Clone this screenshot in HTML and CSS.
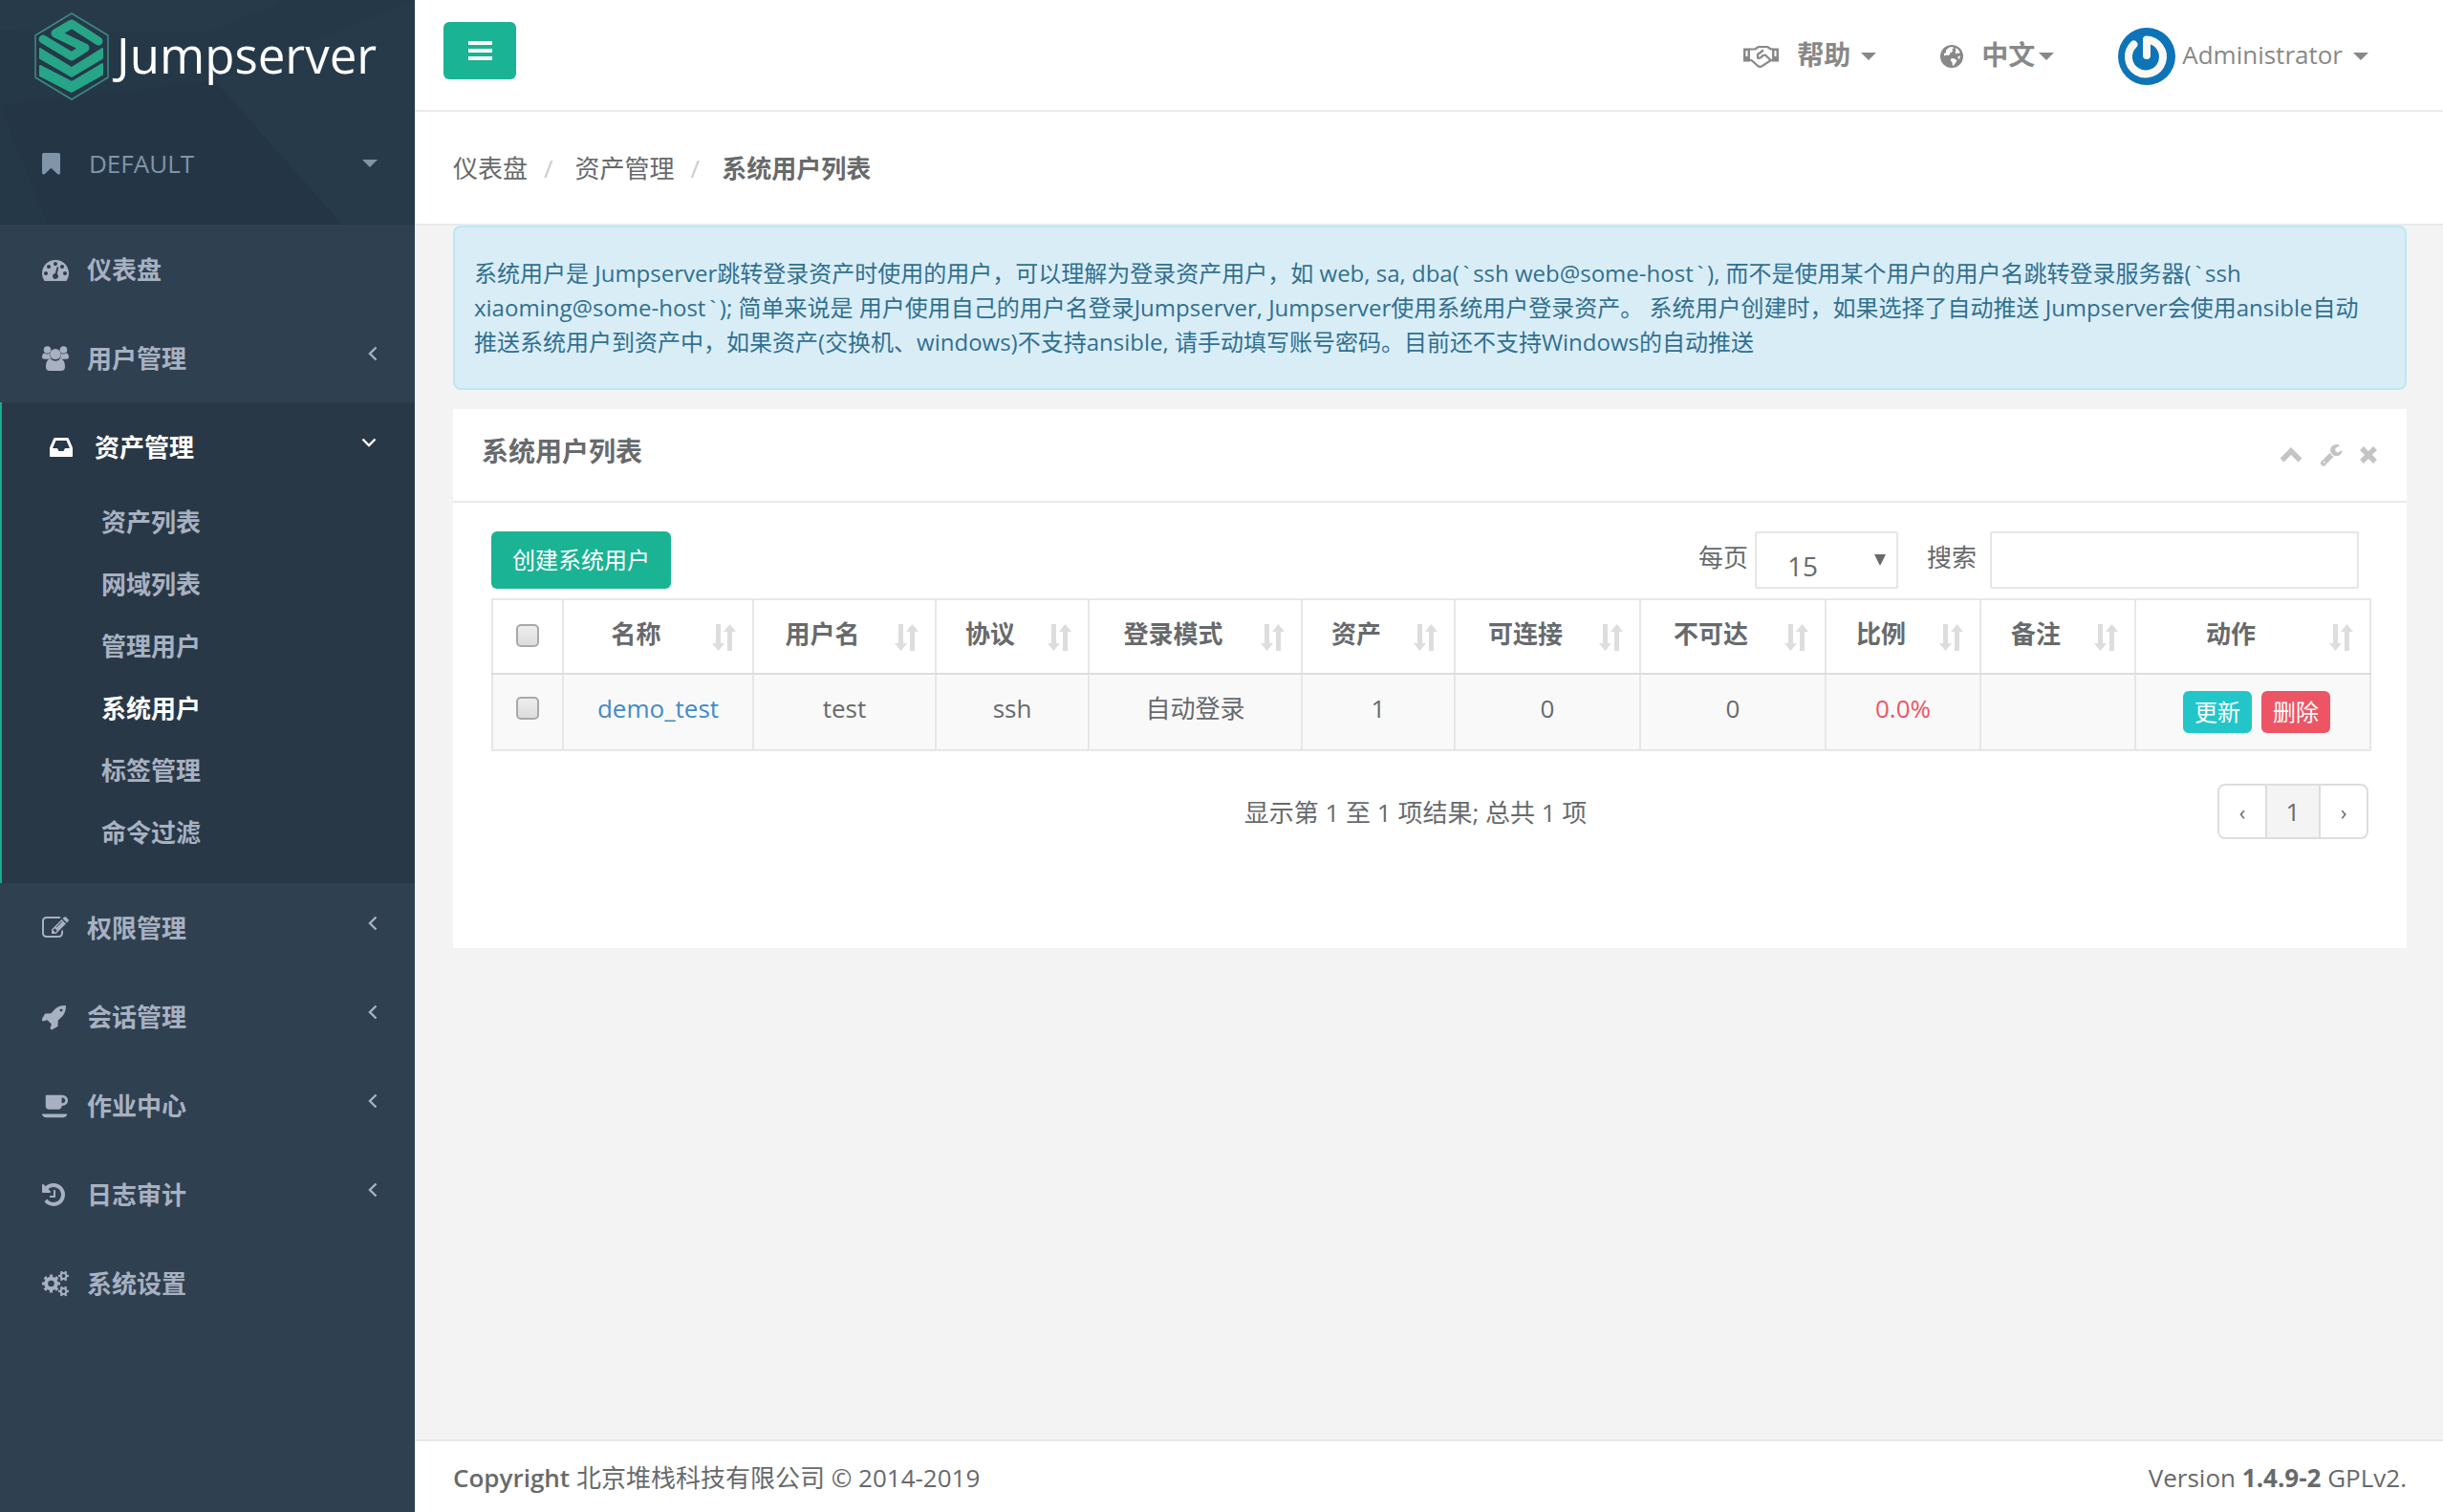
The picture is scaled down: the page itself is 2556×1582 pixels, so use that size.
FILE: index.html
```html
<!DOCTYPE html>
<html lang="zh-CN">
<head>
<meta charset="utf-8">
<meta name="viewport" content="width=device-width, initial-scale=1">
<title>Jumpserver</title>
<link rel="stylesheet" href="styles.css">
</head>
<body>
<svg class="sprite" aria-hidden="true">
  <symbol id="sort" viewBox="0 0 25 28"><path d="M4 0h5v20h4L6.500 28 0 20h4zM16 28h5V8h4L18.500 0 12 8h4z"/></symbol>
  <symbol id="left" viewBox="0 0 10 16"><path d="M8.500 1.500L2 8l6.500 6.500" fill="none" stroke="currentColor" stroke-width="2.400"/></symbol>
  <symbol id="caret" viewBox="0 0 16 8"><path d="M0 0h16L8 8z"/></symbol>
</svg>

<aside class="sidebar">
  <div class="profile">
    <svg class="facets" viewBox="0 0 434 235" preserveAspectRatio="none" aria-hidden="true">
      <path d="M225 85L434 0v235H358z" fill="#273a4a"/>
      <path d="M0 0h300L215 35 0 32z" fill="#273a4a"/>
      <path d="M0 110L225 85l133 150H50z" fill="#243646"/>
    </svg>
    <a class="logo" href="#">
      <svg class="logo-mark" viewBox="0 0 78 92" aria-hidden="true">
        <path d="M39 1l38 23v44L39 91 1 68V24z" fill="none" stroke="#3d8a84" stroke-width="1.500"/>
        <g fill="#27a587" stroke="#27a587" stroke-linejoin="round">
          <path d="M67 30L39 12 22 22l31 15-14 9L9 28" fill="none" stroke-width="9" stroke-linecap="round"/>
          <path d="M6 38l33 20 32-20v10L39 67 6 48z" stroke-width="2"/>
          <path d="M6 56l33 17 32-19v11L39 83 6 66z" stroke-width="2"/>
        </g>
      </svg>
      <span class="logo-text">Jumpserver</span>
    </a>
    <a class="org" href="#">
      <svg class="ico-bookmark" viewBox="256 128 1280 1536"><path d="M1420 128q23 0 44 9 33 13 52.500 41t19.500 62v1289q0 34-19.500 62t-52.500 41q-19 8-44 8-48 0-83-32l-441-424-441 424q-36 33-83 33-23 0-44-9-33-13-52.500-41t-19.500-62v-1289q0-34 19.500-62t52.500-41q21-9 44-9h1048z"/></svg>
      <span>DEFAULT</span>
      <svg class="caret"><use href="#caret"/></svg>
    </a>
  </div>
  <nav>
    <ul class="menu">
      <li><a href="#"><svg class="ico" viewBox="0 0 1792 1792"><path d="M384 1152q0-53-37.500-90.500t-90.500-37.500-90.500 37.500-37.500 90.500 37.500 90.500 90.500 37.500 90.500-37.500 37.500-90.500zm192-448q0-53-37.500-90.500t-90.500-37.500-90.500 37.500-37.500 90.500 37.500 90.500 90.500 37.500 90.500-37.500 37.500-90.500zm428 481l101-382q6-26-7.500-48.500t-38.500-29.500-48 6.500-30 39.500l-101 382q-60 5-107 43.500t-63 98.500q-20 77 20 146t117 89 146-20 89-117q16-60-6-117t-72-91zm660-33q0-53-37.500-90.500t-90.500-37.500-90.500 37.500-37.500 90.500 37.500 90.500 90.500 37.500 90.500-37.500 37.500-90.500zm-640-640q0-53-37.500-90.500t-90.500-37.500-90.500 37.500-37.500 90.500 37.500 90.500 90.500 37.500 90.500-37.500 37.500-90.500zm448 192q0-53-37.500-90.500t-90.500-37.500-90.500 37.500-37.500 90.500 37.500 90.500 90.500 37.500 90.500-37.500 37.500-90.500zm320 448q0 261-141 483-19 29-54 29h-1402q-35 0-54-29-141-221-141-483 0-182 71-348t191-286 286-191 348-71 348 71 286 191 191 286 71 348z"/></svg><span>仪表盘</span></a></li>
      <li><a href="#"><svg class="ico" viewBox="0 0 28 28"><circle cx="5.500" cy="5" r="3.800"/><circle cx="22.500" cy="5" r="3.800"/><path d="M0 13c0-3 1-4.500 2.500-4.500 2 1.200 4 1.200 6 .2-.6 2.500.2 4.500 1.500 6H3c-2 0-3-.6-3-1.700zM28 13c0-3-1-4.500-2.500-4.500-2 1.200-4 1.200-6 .2.600 2.500-.2 4.500-1.500 6h7c2 0 3-.6 3-1.700z"/><circle cx="14" cy="9.500" r="5.600"/><path d="M4 23c0-5 1.500-8.200 5-8.200 3.300 2.500 6.700 2.500 10 0 3.500 0 5 3.200 5 8.200 0 2.400-1.500 4-4 4H8c-2.500 0-4-1.600-4-4z"/></svg><span>用户管理</span><svg class="chev"><use href="#left"/></svg></a></li>
      <li class="active">
        <a href="#"><svg class="ico" viewBox="128 0 1792 1792"><path d="M1151 960h316q-1-3-2.500-8t-2.500-8l-212-496h-708l-212 496q-1 2-2.500 8t-2.500 8h316l95 192h320zm513 30v482q0 26-19 45t-45 19h-1408q-26 0-45-19t-19-45v-482q0-62 25-123l238-552q10-25 36.500-42t52.500-17h832q26 0 52.500 17t36.500 42l238 552q25 61 25 123z"/></svg><span>资产管理</span><svg class="chev chev-down" viewBox="0 0 16 10"><path d="M1.500 1.500L8 8l6.500-6.500" fill="none" stroke="currentColor" stroke-width="2.400"/></svg></a>
        <ul class="submenu">
          <li><a href="#">资产列表</a></li>
          <li><a href="#">网域列表</a></li>
          <li><a href="#">管理用户</a></li>
          <li><a href="#" class="current" aria-current="page">系统用户</a></li>
          <li><a href="#">标签管理</a></li>
          <li><a href="#">命令过滤</a></li>
        </ul>
      </li>
      <li><a href="#"><svg class="ico" viewBox="0 0 1792 1792"><path d="M888 1184l116-116-152-152-116 116v56h96v96h56zm440-720q-16-16-33 1l-350 350q-17 17-1 33t33-1l350-350q17-17 1-33zm80 594v190q0 119-84.500 203.500t-203.500 84.500h-832q-119 0-203.500-84.500t-84.500-203.500v-832q0-119 84.500-203.500t203.500-84.500h832q63 0 117 25 15 7 18 23 3 17-9 29l-49 49q-14 14-32 8-23-6-45-6h-832q-66 0-113 47t-47 113v832q0 66 47 113t113 47h832q66 0 113-47t47-113v-126q0-13 9-22l64-64q15-15 35-7t20 29zm-96-738l288 288-672 672h-288v-288zm444 132l-92 92-288-288 92-92q28-28 68-28t68 28l152 152q28 28 28 68t-28 68z"/></svg><span>权限管理</span><svg class="chev"><use href="#left"/></svg></a></li>
      <li><a href="#"><svg class="ico" viewBox="64 0 1792 1792"><path d="M1440 448q0-40-28-68t-68-28-68 28-28 68 28 68 68 28 68-28 28-68zm224-288q0 249-75.500 430.500t-253.500 360.500q-81 80-195 176l-20 379q-2 16-16 26l-384 224q-7 4-16 4-12 0-23-9l-64-64q-13-14-8-32l85-276-281-281-276 85q-3 1-9 1-14 0-23-9l-64-64q-17-19-5-39l224-384q10-14 26-16l379-20q96-114 176-195 188-187 358-258t431-71q14 0 24 9.500t10 22.500z"/></svg><span>会话管理</span><svg class="chev"><use href="#left"/></svg></a></li>
      <li><a href="#"><svg class="ico" viewBox="0 -64 1920 1792"><path d="M1664 448q0-80-56-136t-136-56h-64v384h64q80 0 136-56t56-136zm-1664 960h1792q0 106-75 181t-181 75h-1280q-106 0-181-75t-75-181zm1856-960q0 159-112.500 271.500t-271.500 112.500h-64v32q0 92-66 158t-158 66h-704q-92 0-158-66t-66-158v-736q0-26 19-45t45-19h1152q159 0 271.500 112.500t112.500 271.500z"/></svg><span>作业中心</span><svg class="chev"><use href="#left"/></svg></a></li>
      <li><a href="#"><svg class="ico" viewBox="128 0 1792 1792"><path d="M1664 896q0 156-61 298t-164 245-245 164-298 61q-172 0-327-72.500t-264-204.500q-7-10-6.500-22.500t8.500-20.500l137-138q10-9 25-9 16 2 23 12 73 95 179 147t225 52q104 0 198.500-40.500t163.500-109.500 109.500-163.500 40.500-198.500-40.500-198.500-109.500-163.500-163.500-109.500-198.500-40.500q-98 0-188 35.500t-160 101.500l137 138q31 30 14 69-17 40-59 40h-448q-26 0-45-19t-19-45v-448q0-42 40-59 39-17 69 14l130 129q107-101 244.500-156.500t284.500-55.500q156 0 298 61t245 164 164 245 61 298zm-640-288v448q0 14-9 23t-23 9h-320q-14 0-23-9t-9-23v-64q0-14 9-23t23-9h224v-352q0-14 9-23t23-9h64q14 0 23 9t9 23z"/></svg><span>日志审计</span><svg class="chev"><use href="#left"/></svg></a></li>
      <li><a href="#"><svg class="ico" viewBox="0 0 28 28"><g fill="none" stroke="currentColor"><circle cx="9.500" cy="14" r="5.300" stroke-width="4"/><circle cx="9.500" cy="14" r="8" stroke-width="3" pathLength="16" stroke-dasharray="1 1" stroke-dashoffset=".5"/><circle cx="22.500" cy="6" r="2.900" stroke-width="2"/><circle cx="22.500" cy="6" r="4.500" stroke-width="2" pathLength="12" stroke-dasharray="1 1" stroke-dashoffset=".5"/><circle cx="22.500" cy="22" r="2.900" stroke-width="2"/><circle cx="22.500" cy="22" r="4.500" stroke-width="2" pathLength="12" stroke-dasharray="1 1" stroke-dashoffset=".5"/></g></svg><span>系统设置</span></a></li>
    </ul>
  </nav>
</aside>

<div class="page">
  <header class="topbar">
    <button class="btn toggle" type="button" aria-label="菜单"><svg viewBox="0 0 25 20"><path d="M0 0h25v4H0zM0 8h25v4H0zM0 16h25v4H0z"/></svg></button>
    <nav class="links">
      <a class="help" href="#"><svg class="ico-hands" viewBox="0 0 37 24"><path d="M6 4.500h6L16 2h9l4 2.500h2M6 16h2.500l7 6.200q2 1.200 4 0l9.500-6.200h2M21 5.500l-6 4.500v3.500q2.500 1.500 5.500-2.500l2.500-.5 5.500 5.500" fill="none" stroke="currentColor" stroke-width="2.200" stroke-linejoin="round"/><path d="M0 3.500h7v14H0zM30 3.500h7v14h-7z"/><path d="M2.500 6h2v6h-2zM32.500 6h2v6h-2z" fill="#fff"/></svg><b>帮助</b><svg class="caret"><use href="#caret"/></svg></a>
      <a class="lang" href="#"><svg class="ico-globe" viewBox="0 0 24 24"><circle cx="12" cy="12" r="12"/><path d="M9.500 2.500l3.500-.5 1 1.500-2 1.500 1.500 1-2 2-2 .5 1 1-2 1.500-2-.5-2.500 1L4 9l2-1V5.500zM15.500 3l3 1.500 2 3-.5 1.500-2-.5-1.500 1-1-2 1-1.500zM11 14.500l3-.5 3.500 2-1 2-2 3-1.500 1-.5-3.500-1.500-2zM18.500 12l2.500-.5-1 3.500-1.500-1z" fill="#fff"/></svg><b>中文</b><svg class="caret"><use href="#caret"/></svg></a>
      <a class="user" href="#"><svg class="avatar" viewBox="0 0 60 60"><circle cx="30" cy="30" r="30" fill="#0d74b8"/><g fill="none" stroke="#fbf7f2" stroke-linecap="round"><path d="M16.500 17.500a18 18 0 1 0 13.500-5" stroke-width="8"/><path d="M30 13v16" stroke-width="8"/></g></svg><span>Administrator</span><svg class="caret"><use href="#caret"/></svg></a>
    </nav>
  </header>

  <ol class="breadcrumb">
    <li><a href="#">仪表盘</a></li>
    <li><a href="#">资产管理</a></li>
    <li aria-current="page"><b>系统用户列表</b></li>
  </ol>

  <main class="content">
    <div class="alert" role="note">系统用户是 Jumpserver跳转登录资产时使用的用户，可以理解为登录资产用户，如 web, sa, dba(<span class="tick">`</span>ssh web@some-host<span class="tick">`</span>), 而不是使用某个用户的用户名跳转登录服务器(<span class="tick">`</span>ssh xiaoming@some-host<span class="tick">`</span>); 简单来说是 用户使用自己的用户名登录Jumpserver, Jumpserver使用系统用户登录资产。 系统用户创建时，如果选择了自动推送 Jumpserver会使用ansible自动推送系统用户到资产中，如果资产(交换机、windows)不支持ansible, 请手动填写账号密码。目前还不支持Windows的自动推送</div>

    <section class="panel">
      <div class="panel-title">
        <h1>系统用户列表</h1>
        <div class="tools">
          <a href="#" aria-label="折叠"><svg class="ico-up" viewBox="0 0 24 16"><path d="M2.500 13.500L12 4l9.500 9.500" fill="none" stroke="currentColor" stroke-width="5.500"/></svg></a>
          <a href="#" aria-label="设置"><svg class="ico-wrench" viewBox="64 64 1664 1728"><path d="M448 1472q0-26-19-45t-45-19-45 19-19 45 19 45 45 19 45-19 19-45zm644-420l-682 682q-37 37-90 37-52 0-91-37l-106-108q-38-36-38-90 0-53 38-91l681-681q39 98 114.500 173.500t173.500 114.500zm634-435q0 39-23 106-47 134-164.500 217.500t-258.500 83.500q-185 0-316.500-131.500t-131.500-316.500 131.500-316.500 316.500-131.500q58 0 121.500 16.500t107.500 46.500q16 11 16 28t-16 28l-293 169v224l193 107q5-3 79-48.500t135.500-81 70.500-35.500q15 0 23.500 10t8.500 25z"/></svg></a>
          <a href="#" aria-label="关闭"><svg class="ico-x" viewBox="0 0 18 18"><path d="M2 2l14 14M16 2L2 16" stroke="currentColor" stroke-width="5.500"/></svg></a>
        </div>
      </div>
      <div class="panel-body">
        <div class="toolbar">
          <button class="btn create" type="button">创建系统用户</button>
          <div class="filters">
            <label for="len">每页</label>
            <span class="select">
              <select id="len"><option>15</option><option>25</option><option>50</option></select>
              <svg viewBox="0 0 12 12" aria-hidden="true"><path d="M0 0h12L6 12z"/></svg>
            </span>
            <label for="search">搜索</label>
            <input id="search" class="search" type="text">
          </div>
        </div>

        <table>
          <colgroup><col class="c-check"><col class="c-name"><col class="c-user"><col class="c-proto"><col class="c-mode"><col class="c-asset"><col class="c-reach"><col class="c-reach"><col class="c-ratio"><col class="c-ratio"><col class="c-action"></colgroup>
          <thead>
            <tr>
              <th scope="col"><input type="checkbox" aria-label="全选"></th>
              <th scope="col"><div class="th"><span>名称</span><svg><use href="#sort"/></svg></div></th>
              <th scope="col"><div class="th"><span>用户名</span><svg><use href="#sort"/></svg></div></th>
              <th scope="col"><div class="th"><span>协议</span><svg><use href="#sort"/></svg></div></th>
              <th scope="col"><div class="th"><span>登录模式</span><svg><use href="#sort"/></svg></div></th>
              <th scope="col"><div class="th"><span>资产</span><svg><use href="#sort"/></svg></div></th>
              <th scope="col"><div class="th"><span>可连接</span><svg><use href="#sort"/></svg></div></th>
              <th scope="col"><div class="th"><span>不可达</span><svg><use href="#sort"/></svg></div></th>
              <th scope="col"><div class="th"><span>比例</span><svg><use href="#sort"/></svg></div></th>
              <th scope="col"><div class="th"><span>备注</span><svg><use href="#sort"/></svg></div></th>
              <th scope="col"><div class="th"><span>动作</span><svg><use href="#sort"/></svg></div></th>
            </tr>
          </thead>
          <tbody>
            <tr>
              <td><input type="checkbox" aria-label="选择 demo_test"></td>
              <td><a class="name" href="#">demo_test</a></td>
              <td>test</td>
              <td>ssh</td>
              <td>自动登录</td>
              <td>1</td>
              <td>0</td>
              <td>0</td>
              <td class="bad">0.0%</td>
              <td></td>
              <td><div class="actions"><button class="btn update" type="button">更新</button><button class="btn delete" type="button">删除</button></div></td>
            </tr>
          </tbody>
        </table>

        <div class="table-foot">
          <p>显示第 1 至 1 项结果; 总共 1 项</p>
          <nav class="pager" aria-label="分页"><a href="#">‹</a><a class="on" href="#">1</a><a href="#">›</a></nav>
        </div>
      </div>
    </section>
  </main>

  <footer class="footer">
    <div><strong>Copyright</strong> 北京堆栈科技有限公司 © 2014-2019</div>
    <div>Version <strong class="ver">1.4.9-2</strong> GPLv2.</div>
  </footer>
</div>
</body>
</html>
```
FILE: styles.css
```css
* { box-sizing: border-box; }

body {
  margin: 0;
  min-height: 100vh;
  display: flex;
  background: #2f4050;
  color: #676a6c;
  font-family: "Open Sans", "Noto Sans CJK SC", sans-serif;
  font-size: 26px;
  line-height: 36px;
}

a { color: inherit; text-decoration: none; }
ul, ol { list-style: none; margin: 0; padding: 0; }
button, input, select { font: inherit; color: inherit; margin: 0; }
svg { display: block; flex: none; fill: currentColor; }
.sprite { position: absolute; width: 0; height: 0; }
.caret { width: 16px; height: 8px; }

/* Sidebar */
.sidebar { flex: none; width: 434px; background: #2f4050; color: #a7b1c2; }

.profile { position: relative; height: 235px; background: #253848; }
.facets { position: absolute; inset: 0; width: 100%; height: 100%; }

.logo { position: relative; display: flex; gap: 8px; padding: 13px 0 0 36px; color: #fff; }
.logo-mark { width: 78px; height: 92px; }
.logo-text { font-size: 51px; line-height: 88px; }

.org {
  position: relative;
  display: flex;
  align-items: center;
  padding: 48px 39px 0 44px;
  color: #8095a8;
}
.org span { flex: 1; margin-left: 30px; }
.ico-bookmark { width: 19px; height: 23px; }

.menu > li > a {
  display: flex;
  align-items: center;
  height: 93px;
  padding: 0 39px 0 44px;
  font-weight: 700;
}
.menu > li > a span { flex: 1; }
.ico { width: 28px; height: 28px; margin-right: 19px; }
.chev { width: 10px; height: 16px; margin-bottom: 10px; }
.chev-down { width: 16px; height: 10px; }

.menu > .active { background: #293846; border-left: 2px solid #19aa8d; }
.menu > .active > a { padding: 0 40px 0 50px; color: #fff; }
.submenu { padding-bottom: 20px; }
.submenu a { display: block; padding-left: 104px; line-height: 65px; font-weight: 700; }
.submenu .current { color: #fff; }

/* Page column */
.page { flex: 1; min-width: 0; display: flex; flex-direction: column; background: #f3f3f4; }

.btn { border: 0; border-radius: 6px; color: #fff; font-size: 24px; cursor: pointer; }

.topbar {
  display: flex;
  justify-content: space-between;
  align-items: flex-start;
  height: 117px;
  padding: 0 78px 0 30px;
  background: #fff;
  border-bottom: 2px solid #e7eaec;
}
.toggle {
  display: flex;
  align-items: center;
  justify-content: center;
  width: 76px;
  height: 60px;
  margin-top: 23px;
  background: #1ab394;
}
.toggle svg { width: 25px; height: 20px; }

.links { display: flex; height: 117px; align-items: center; color: #888; }
.links a { display: flex; align-items: center; }
.links b, .links span { padding-bottom: 4px; }
.links b { font-size: 28px; }
.help { margin-right: 67px; }
.help b { margin: 0 11px 0 19px; }
.lang { margin-right: 67px; }
.lang b { margin: 0 4px 0 19px; }
.user span { margin: 0 11px 0 7px; }
.ico-hands { width: 37px; height: 24px; }
.ico-globe { width: 24px; height: 24px; }
.avatar { width: 60px; height: 60px; }

.breadcrumb {
  display: flex;
  height: 119px;
  padding: 41px 40px 0;
  background: #fff;
  border-bottom: 2px solid #e7eaec;
}
.breadcrumb li + li::before { content: "/"; padding: 0 23px 0 17px; color: #ccc; }

.content { flex: 1; padding: 0 38px 40px 40px; }

.alert {
  padding: 30px 44px 30px 20px;
  border: 2px solid #bce8f1;
  border-radius: 8px;
  background: #d9edf7;
  color: #31708f;
  font-size: 24px;
}
.tick { font-family: "Liberation Mono", monospace; line-height: 1; }

/* Panel */
.panel { margin-top: 20px; background: #fff; }
.panel-title {
  display: flex;
  justify-content: space-between;
  height: 98px;
  padding: 26px 31px 0 30px;
  border-bottom: 2px solid #e7eaec;
}
.panel-title h1 { margin: 0; font-size: 28px; line-height: 36px; }
.tools { display: flex; gap: 18px; height: 44px; align-items: center; color: #c4c4c4; }
.ico-up { width: 24px; height: 16px; }
.ico-wrench { width: 24px; height: 24px; }
.ico-x { width: 18px; height: 18px; }

.panel-body { padding: 30px 40px 114px; }

.toolbar { display: flex; justify-content: space-between; margin-bottom: 10px; }
.create { height: 60px; padding: 0 22px; background: #1ab394; }
.filters { display: flex; padding-right: 10px; }
.filters label { padding-top: 9px; }
.select { position: relative; width: 150px; margin: 0 30px 0 7px; }
.select select {
  display: block;
  width: 100%;
  height: 60px;
  padding: 12px 24px 0 32px;
  border: 2px solid #e5e6e7;
  border-radius: 2px;
  background: #fff;
  font-size: 28px;
  appearance: none;
}
.select svg { position: absolute; right: 13px; top: 24px; width: 12px; height: 12px; }
.search {
  width: 386px;
  height: 60px;
  margin-left: 14px;
  padding: 0 16px;
  border: 2px solid #e5e6e7;
  border-radius: 2px;
  background: #fff;
}

/* Table */
table { width: 100%; border-collapse: collapse; table-layout: fixed; }
.c-check { width: 74px; }
.c-name { width: 199px; }
.c-user { width: 191px; }
.c-proto { width: 160px; }
.c-mode { width: 223px; }
.c-asset { width: 160px; }
.c-reach { width: 194px; }
.c-ratio { width: 162px; }
.c-action { width: 246px; }

th, td { border: 2px solid #e7e7e7; text-align: center; vertical-align: middle; }
th { height: 78px; padding: 0 0 2px; border-bottom-color: #ddd; }
td { height: 80px; padding: 0 0 8px; background: #f9f9f9; }
.th { display: flex; padding-right: 17px; align-items: center; }
.th span { flex: 1; padding: 0 4px 5px 0; }
.th svg { width: 25px; height: 28px; margin-top: 4px; color: #ddd; }
.name { color: #428bca; }
.bad { color: #ed5565; }

input[type="checkbox"] {
  display: block;
  width: 24px;
  height: 24px;
  margin: 0 auto;
  appearance: none;
  border: 2px solid #a9a9a9;
  border-radius: 5px;
  background: linear-gradient(#eee, #dcdcdc);
}

.actions { display: flex; justify-content: center; gap: 10px; padding: 8px 0 0 8px; }
.actions .btn { height: 44px; padding: 0 12px; }
.update { background: #23c6c8; }
.delete { background: #ed5565; }

.table-foot { display: grid; grid-template-columns: 1fr auto 1fr; padding-top: 34px; }
.table-foot p { grid-column: 2; margin: 12px 30px 0 0; }
.pager { justify-self: end; display: flex; border: 2px solid #ddd; border-radius: 8px; }
.pager a { width: 48px; text-align: center; line-height: 54px; font-size: 22px; }
.pager .on { width: 58px; border: solid #ddd; border-width: 0 2px; background: #f4f4f4; font-size: 26px; }

.footer {
  display: flex;
  justify-content: space-between;
  padding: 20px 38px 18px 40px;
  background: #fff;
  border-top: 2px solid #e7eaec;
}
.footer strong { font-weight: 600; }
.footer .ver { font-weight: 700; }
```
